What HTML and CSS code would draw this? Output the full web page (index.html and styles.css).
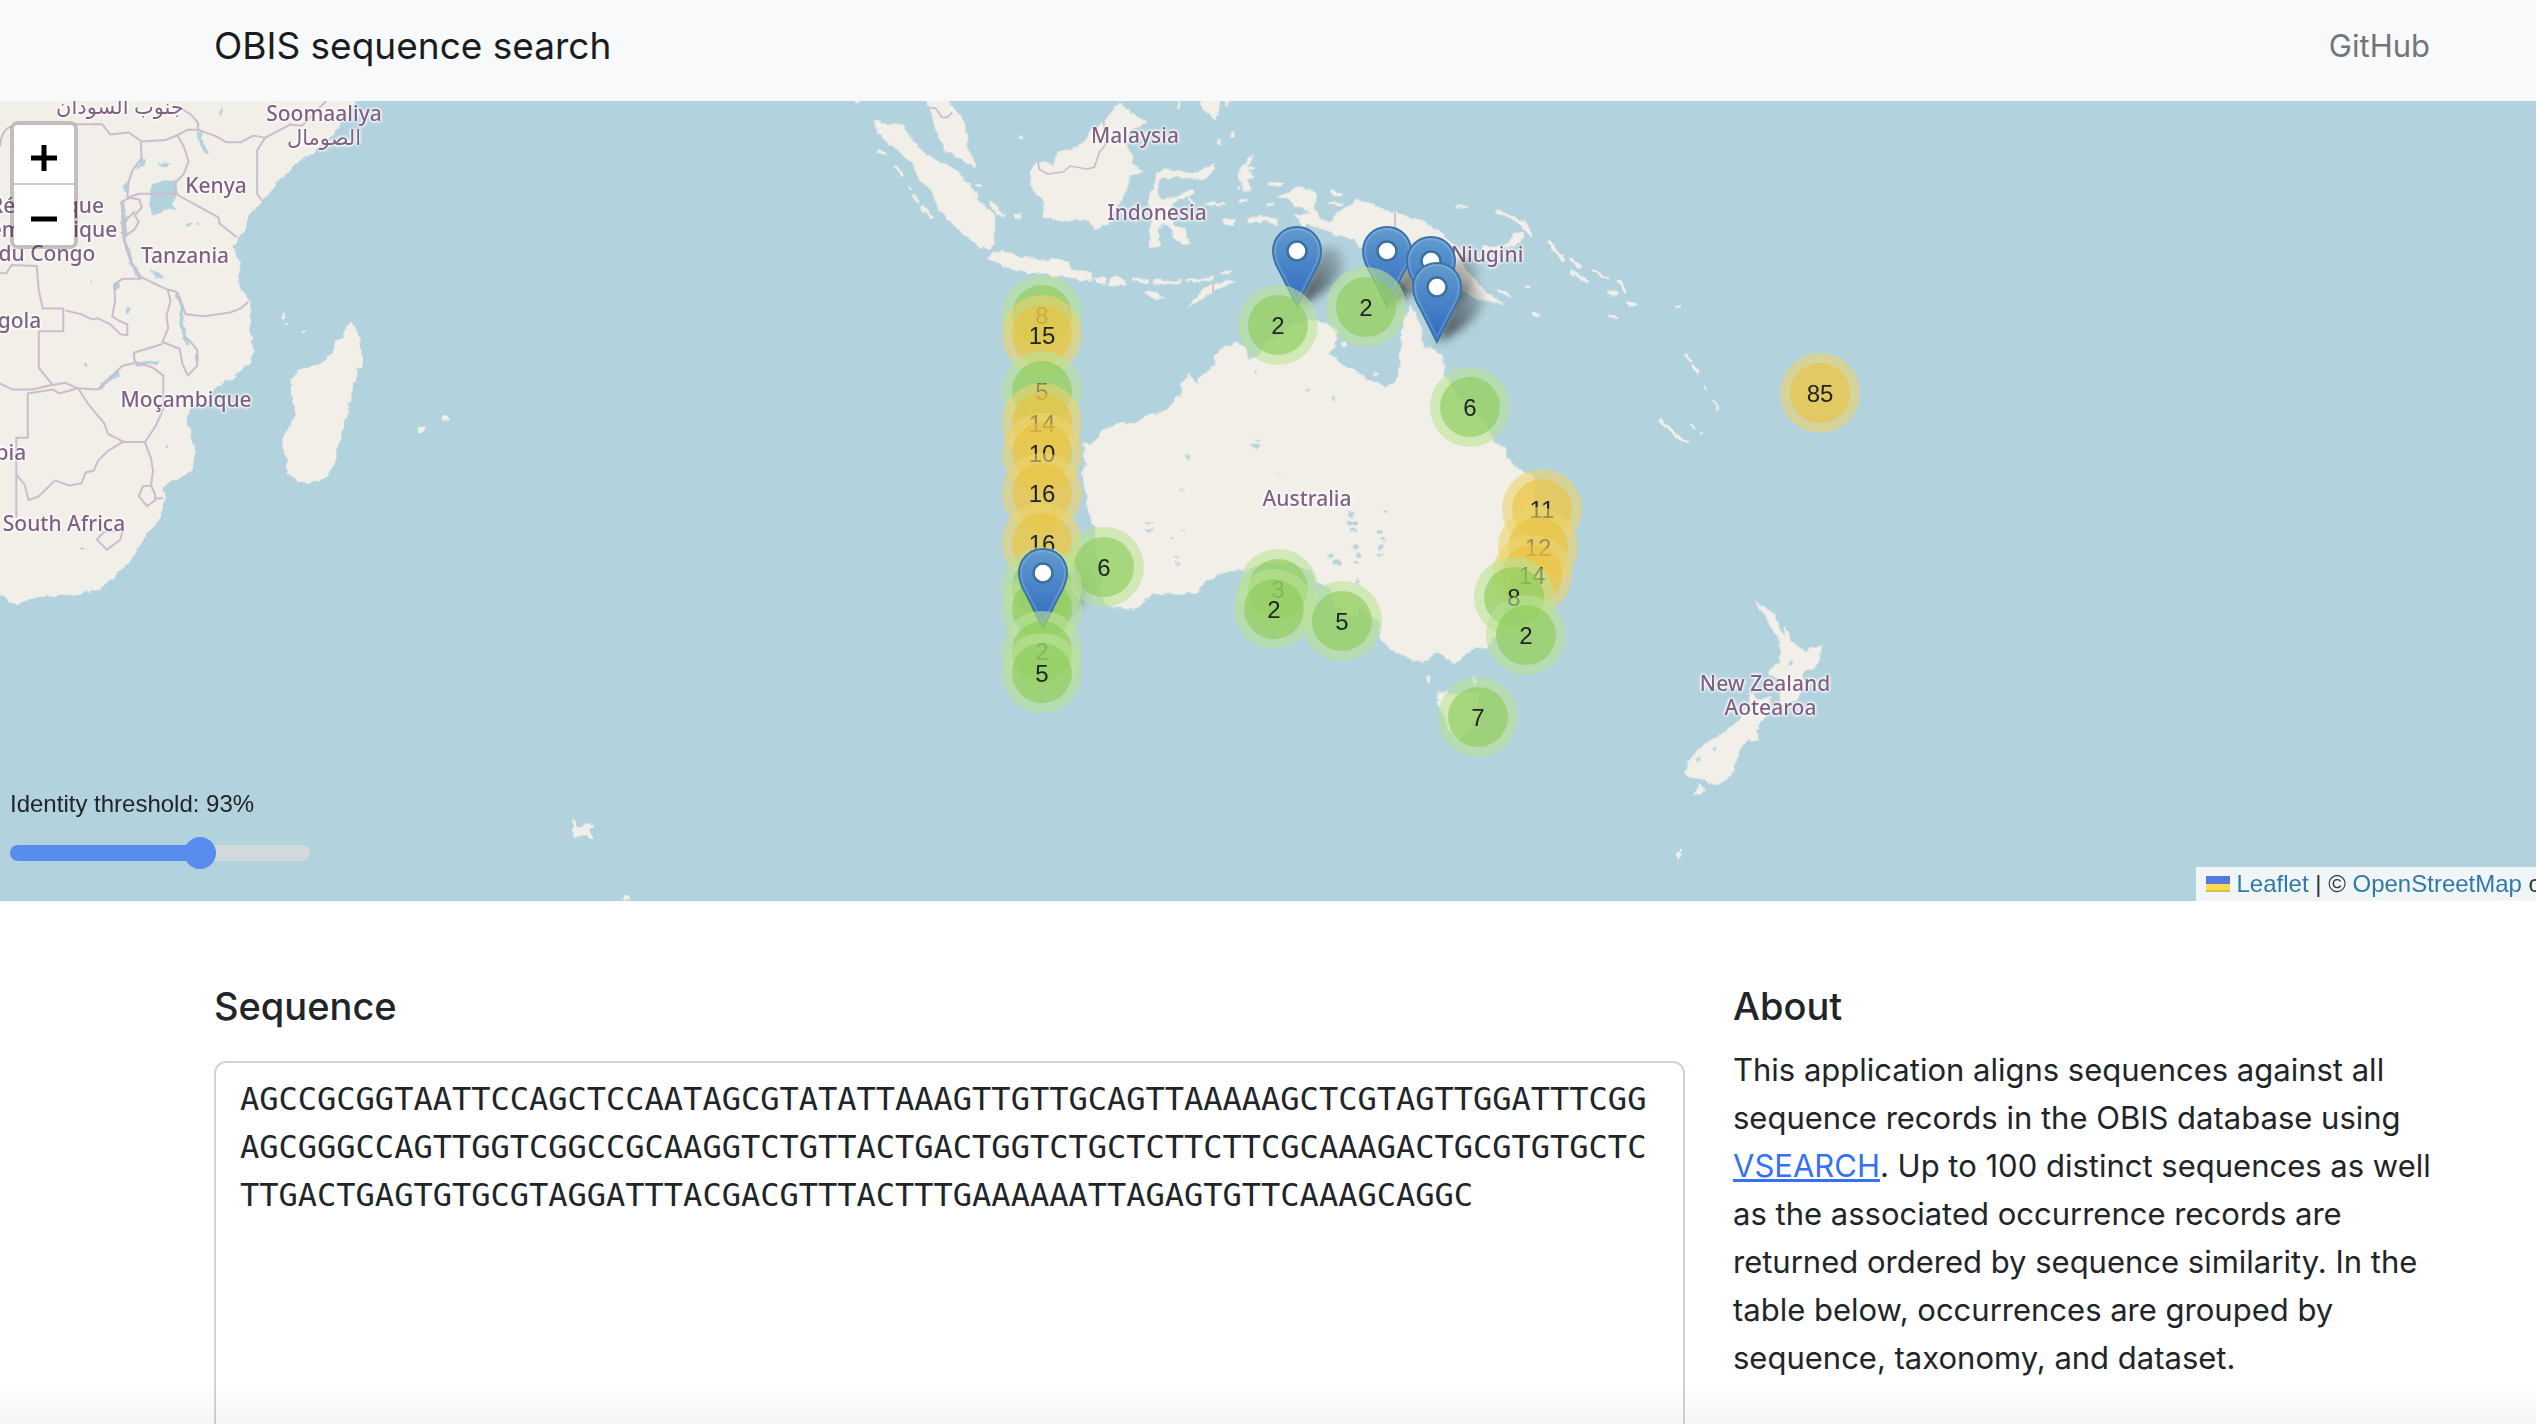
FILE: index.html
```html
<!DOCTYPE html>
<html lang="en">
<head>
<meta charset="utf-8">
<title>OBIS sequence search</title>
<link rel="stylesheet" href="styles.css">
</head>
<body>
<header class="navbar">
  <div class="container navbar-inner">
    <a class="brand" href="#">OBIS sequence search</a>
    <nav><a class="nav-link" href="#">GitHub</a></nav>
  </div>
</header>

<section class="map" aria-label="Occurrence map">
  <div class="map-pane">
    <svg class="tiles" viewBox="0 0 2536 800" width="2536" height="800" aria-hidden="true">
      <defs>
        <filter id="coast" x="0" y="0" width="2536" height="800" filterUnits="userSpaceOnUse">
          <feTurbulence type="fractalNoise" baseFrequency="0.12" numOctaves="3" seed="4" result="n"/>
          <feDisplacementMap in="SourceGraphic" in2="n" scale="6" xChannelSelector="R" yChannelSelector="G"/>
        </filter>
        <filter id="blur" x="-50%" y="-50%" width="200%" height="200%"><feGaussianBlur stdDeviation="5"/></filter>
        <linearGradient id="pinfill" x1="0" y1="0" x2="0" y2="1"><stop offset="0" stop-color="#619bce"/><stop offset="1" stop-color="#2f69c0"/></linearGradient>
        <linearGradient id="shade" x1="0" y1="1" x2="1" y2="0"><stop offset="0" stop-color="#000" stop-opacity=".7"/><stop offset="1" stop-color="#000" stop-opacity=".1"/></linearGradient>
        <symbol id="pin" viewBox="0 0 50 82">
          <path d="M25 1C11.500 1 1 11.500 1 25c0 9 4 16 8 23l16 32 16-32c4-7 8-14 8-23C49 11.500 38.500 1 25 1z" fill="url(#pinfill)" stroke="#3973a8" stroke-width="2"/>
          <path d="M25 3C12.600 3 3 12.600 3 25c0 8.500 4 15.500 8 22.500L25 75l14-27.500c4-7 8-14 8-22.500C47 12.600 37.400 3 25 3z" fill="none" stroke="#fff" stroke-opacity=".16" stroke-width="2"/>
          <circle cx="25" cy="25" r="9.500" fill="#fff" stroke="#3a709f" stroke-width="2.500"/>
        </symbol>
      </defs>
      <g class="land" filter="url(#coast)">
        <!-- Africa and Madagascar -->
        <g transform="matrix(.40816 0 0 .39541 0 -101)">
          <path d="M-20 240H880L862 270 835 312 820 340 785 365 770 385 725 415 690 450 660 485 640 515 610 540 605 565 590 595 572 625 580 650 588 665 583 700 592 730 612 765 614 800 613 850 622 885 615 915 590 940 565 960 525 980 510 1010 470 1030 455 1050 460 1075 472 1110 475 1140 472 1185 455 1200 415 1220 400 1235 403 1260 395 1290 388 1320 360 1345 335 1395 300 1440 260 1475 235 1493 205 1498 180 1508 145 1505 100 1508 65 1518 40 1530 20 1520 5 1505-20 1480Z"/>
          <path d="M858 812 868 825 880 855 883 895 892 915 885 928 873 930 875 950 865 970 860 1010 850 1050 838 1090 825 1140 815 1180 800 1207 775 1215 750 1225 730 1217 710 1200 703 1180 703 1155 692 1130 693 1105 710 1080 725 1050 720 1020 712 990 715 965 727 938 750 933 775 922 800 910 815 895 825 860 840 850 850 830Z"/>
          <circle cx="1034" cy="1085" r="8"/><circle cx="1091" cy="1058" r="8"/><ellipse cx="694" cy="800" rx="4" ry="8"/><circle cx="704" cy="816" r="3"/><circle cx="742" cy="836" r="4"/>
        </g>
        <!-- Indonesia and Malaysia -->
        <g transform="matrix(.35714 0 0 .33333 840 -11)">
          <path d="M95 88 120 100 175 103 190 130 215 165 240 190 290 220 320 235 345 260 365 285 385 320 400 345 437 380 433 420 430 475 395 475 360 440 330 420 305 390 275 350 255 300 220 270 208 225 185 205 150 170 120 145 100 115Z"/>
          <path d="M235 20H295L320 60 345 90 355 130 355 170 370 205 380 235 350 215 320 195 290 180 285 155 265 115 258 75Z"/>
          <path d="M430 485 480 487 500 498 545 507 580 510 610 505 640 520 650 540 705 548 705 575 670 570 640 562 600 558 560 550 520 545 470 535 450 520 415 510Z"/>
          <path d="M785 38 800 55 830 80 858 100 830 110 810 130 800 160 820 200 820 220 850 245 810 255 803 300 780 340 760 380 750 405 715 418 700 395 660 390 625 395 572 378 568 330 540 300 530 250 550 212 600 225 610 185 655 175 690 150 700 125 740 95 765 60Z"/>
          <path d="M885 255 910 235 940 242 1000 248 1025 235 1045 220 1050 235 1025 268 990 265 930 262 895 268 888 290 890 310 905 330 940 318 985 300 992 310 950 330 925 350 920 390 940 410 965 420 982 460 960 468 935 440 930 420 905 395 893 420 895 468 865 470 868 420 875 370 862 330 870 305 880 290Z"/>
          <path d="M710 560 745 565 740 585 715 575ZM752 570 772 558 800 568 800 586 755 585ZM818 565 865 570 860 580 820 575ZM880 568 925 574 962 570 950 582 880 582ZM970 570 1045 560 1045 568 972 578ZM1070 545 1098 541 1090 552 1070 552ZM850 602 885 605 908 625 895 630 855 612ZM1112 570 1060 578 1020 595 1000 620 975 652 1010 628 1040 605 1080 588Z"/>
          <path d="M1160 192 1138 212 1120 235 1120 260 1130 303 1150 303 1140 270 1162 262 1140 245 1162 230 1140 228ZM1010 20H1060L1062 60 1050 88 1020 65ZM1078 20 1090 33 1080 52ZM1140 385 1180 378 1220 385 1228 407 1190 395 1150 397ZM1075 388 1112 388 1102 408 1080 405ZM1118 328H1140V338H1118ZM1195 340H1215V348H1195ZM1200 278H1242L1235 292 1205 286ZM415 335 435 335 445 360 460 382 435 370ZM487 368 510 370 508 386 490 386ZM1020 338H1078V346H1020ZM498 138 510 138 512 150 502 152Z"/>
          <path d="M108 180 130 196M157 230 175 256M192 285 200 296M205 315 218 336M228 350 260 385M380 285 398 290M975 325 990 340M1372 305 1400 318M1365 340 1410 342M1100 125V145M1060 150V165M1120 295 1112 292M45 33 50 42M948 35 948 55" fill="none" stroke-width="8"/>
        </g>
        <!-- New Guinea and Melanesia -->
        <g transform="matrix(.33333 0 0 .33333 1200 -11)">
          <path d="M230 315 260 312 290 290 345 305 350 330 340 355 365 385 390 395 410 370 450 345 475 328 530 350 600 372 650 390 690 405 730 430 750 455 770 490 790 530 830 570 845 600 880 620 912 642 870 635 820 625 790 600 760 590 740 595 700 600 620 595 590 560 560 520 480 465 440 445 390 430 350 410 320 400 310 415 300 395 280 375 330 370 310 355 280 350 270 330Z"/>
          <path d="M942 430 970 422 972 445 945 465 905 478 850 486 845 470 890 468 925 458ZM1220 598 1255 605 1252 618 1225 612Z"/>
          <path d="M892 364 930 378 970 400 992 436M772 350H796M1048 455 1062 480 1090 508M1115 510 1140 528M1180 540 1220 565M1255 570 1275 605M1285 635 1305 648M1115 545 1160 575M1380 990 1415 1025 1462 1056M1460 795 1470 815M1482 830 1492 848M895 600 930 620M978 590H990M1000 670 1018 676M1232 676 1250 684M1430 648H1438M1475 1005 1482 1014M395 300 420 316" fill="none" stroke-width="10" stroke-linecap="round"/>
        </g>
        <!-- Australia -->
        <g transform="matrix(.35714 0 0 .33333 960 159)">
          <path d="M350 610 345 545 365 555 400 510 440 490 480 490 530 465 580 450 600 420 625 390 615 370 640 340 660 370 680 340 710 320 715 285 735 265 775 245 805 270 810 300 840 280 860 240 890 230 930 190 980 180 1030 190 1055 215 1050 250 1037 280 1080 320 1130 350 1190 383 1215 370 1230 330 1235 240 1240 190 1263 135 1285 185 1300 265 1325 265 1350 290 1358 345 1385 400 1430 440 1470 490 1495 548 1525 560 1530 590 1561 625 1606 650 1610 700 1612 760 1600 810 1590 880 1540 960 1520 1050 1500 1130 1476 1162 1441 1163 1421 1180 1386 1215 1351 1182 1331 1175 1296 1210 1240 1187 1200 1165 1178 1135 1175 1090 1140 1060 1115 1035 1110 1075 1085 1060 1050 1040 1035 980 1000 970 985 930 930 910 860 908 800 930 740 935 685 965 665 1000 545 1000 485 1047 440 1045 410 1035 390 1000 400 930 380 880 375 800 355 740 350 680 342 640Z"/>
          <circle cx="1077" cy="252" r="9"/><ellipse cx="1164" cy="343" rx="8" ry="5"/>
        </g>
        <!-- Tasmania and New Zealand -->
        <g transform="matrix(.35714 0 0 .33333 1380 279)">
          <path d="M158 935 190 940 275 935 272 1000 240 1060 220 1075 195 1050 170 990ZM130 885H142V905H132ZM258 890 270 896 272 915 262 912Z"/>
          <path d="M1050 662 1064 676 1087 687 1107 707 1114 742 1132 767 1135 737 1142 757 1155 792 1192 814 1217 799 1237 799 1232 832 1217 862 1192 872 1182 892 1187 922 1167 957 1142 972 1117 967 1127 932 1122 902 1087 882 1092 867 1117 847 1119 812 1120 787 1102 752 1082 712 1064 692Z"/>
          <path d="M1032 937 1052 947 1062 962 1097 952 1087 987 1072 1022 1052 1047 1064 1080 1032 1082 1005 1107 1000 1142 987 1177 962 1207 937 1217 902 1197 872 1192 854 1177 862 1152 882 1112 917 1087 952 1067 987 1037 1007 1017 1037 972Z"/>
          <path d="M893 1213 904 1228 898 1240 882 1245ZM908 15 916 28ZM872 132 882 150M933 58 945 92M896 158 904 164" stroke-width="5"/>
        </g>
        <path d="M573 718 578 726 593 724 589 730 592 737 581 733 574 737ZM624 795H629V799H624ZM1677 752 1681 748V757H1678Z"/>
      </g>
      <g class="water" filter="url(#coast)">
        <g transform="matrix(.40816 0 0 .39541 0 -101)">
          <path d="M372 468 400 455 430 455 436 490 422 515 430 530 400 530 372 545 368 500ZM335 425 345 405 360 400 352 420ZM388 412 418 414 410 424ZM278 718 292 708 292 728 278 738ZM368 680 385 688 402 705 385 702ZM335 918 390 914 385 922 335 924ZM312 780 322 780 318 793 310 793ZM455 568 470 563 465 572Z"/>
          <path d="M300 510 304 560 307 620 322 662 346 708M434 742 447 775 444 820 455 858 462 875M488 335 495 365 506 388M312 460 308 485M482 895V915M245 980 268 955 292 945" fill="none" stroke-width="9"/>
          <path d="M540 275 543 290M220 712 224 708M208 918V926M196 1388H208M404 1132H412M484 565H488" fill="none" stroke-width="6"/>
        </g>
        <g transform="matrix(.35714 0 0 .33333 960 159)">
          <path d="M812 555H840L832 566 818 562ZM830 538H842V544H830ZM628 590 648 586 640 598ZM880 635 902 643ZM968 388H982V394H968ZM1035 410 1052 416 1046 424ZM822 330 832 330 828 342ZM1085 756H1100V770H1085ZM1085 782H1112V795H1085ZM1092 810H1110V818H1092ZM1098 856 1115 858 1110 868 1098 866ZM1108 880H1124V892H1108ZM1045 902H1064V914H1045ZM1105 904H1118V912H1105ZM1028 882H1042V892H1028ZM1168 810H1180V820H1168ZM1182 832H1192V838H1182ZM1172 858H1186V866H1172ZM1170 880H1184V886H1170ZM518 806H542L530 818ZM520 788H536V792H520ZM616 688H628V692H616ZM600 886H610V890H600ZM604 906H614V914H604ZM1110 950 1118 968 1108 972ZM342 608H352V620H342ZM1186 752H1198V758H1186ZM620 810H630V814H620ZM590 832H600V836H590Z"/>
        </g>
        <g transform="matrix(.35714 0 0 .33333 1380 279)"><path d="M1146 843H1156V855H1146ZM932 1105 942 1100 936 1116ZM888 1135 896 1132 892 1148Z"/></g>
      </g>
      <g class="borders">
        <g transform="matrix(.40816 0 0 .39541 0 -101)">
          <path d="M185 314H250L270 340 315 335 348 358 405 354 435 342 460 328H485L530 345 555 360 590 360 620 343 650 348 675 335 710 315 740 318 770 285 800 255M445 275 468 290 485 310V328M435 342 450 370 462 408 450 440 430 462V490L535 550 538 565 580 600M650 348 630 380V490L645 512M345 358 347 400 325 430 315 460 312 500M312 500 340 490H430M300 545 298 510 320 500 342 505 347 525 330 545 340 560 330 580 310 595 305 560 330 535M300 545 302 600 320 660 345 700 380 718 410 732 432 738 445 770 455 795 500 800 565 790 590 780 608 763M345 705 300 705 280 720 282 760 275 800 290 810 312 820V848L295 845 270 820 240 805 225 808 200 795 160 785M0 690 15 692 28 670 90 673 95 735 105 780 155 780V838H95V930L130 975M410 732 418 760 408 800 412 830 398 865 440 882 447 920 460 950 483 925V885L465 862 450 850M398 870 328 892 330 915 375 930 400 950V1035L380 1080 355 1118H305L265 1098 255 1070 215 1020 190 980M330 918 300 925 265 960 240 985 190 982 160 968 120 975 80 985 30 985 0 970M190 982 145 995 130 985 68 995V1107H40V1310M305 1115 265 1140 240 1165 230 1190 210 1195 200 1222 170 1228 135 1215 95 1255 70 1265 60 1225 40 1200M355 1118 370 1160 375 1190 370 1228 350 1230 340 1255 360 1280 380 1265V1250L370 1228M380 1260H400M237 1365 255 1345 300 1342 295 1365 262 1390ZM0 370C2 345 10 325 28 320"/>
        </g>
        <g transform="matrix(.35714 0 0 .33333 840 -11)">
          <path d="M553 212 558 238 582 252 625 246 645 228 690 237 712 232 727 185 743 165 738 92M247 52 268 55 285 82 300 82 314 68M1045 583V605M1554 368V412"/>
        </g>
      </g>
    </svg>

    <span class="place arabic" style="left:120px;top:5px">جنوب السودان</span>
    <span class="place" style="left:324px;top:24px">Soomaaliya<br>الصومال</span>
    <span class="place" style="left:216px;top:84px">Kenya</span>
    <span class="place" style="left:47px;top:128px">République<br>démocratique<br>du Congo</span>
    <span class="place" style="left:185px;top:154px">Tanzania</span>
    <span class="place" style="left:6px;top:219px">Angola</span>
    <span class="place" style="left:186px;top:298px">Moçambique</span>
    <span class="place" style="left:-16px;top:351px">Namibia</span>
    <span class="place" style="left:64px;top:422px">South Africa</span>
    <span class="place" style="left:1135px;top:34px">Malaysia</span>
    <span class="place" style="left:1157px;top:111px">Indonesia</span>
    <span class="place" style="left:1487px;top:153px">Niugini</span>
    <span class="place" style="left:1307px;top:397px">Australia</span>
    <span class="place" style="left:1765px;top:594px">New Zealand<br>&nbsp;&nbsp;Aotearoa</span>

    <svg class="shadows" viewBox="0 0 2536 800" width="2536" height="800" aria-hidden="true">
      <g filter="url(#blur)" fill="url(#shade)">
        <path id="sh" d="M1297 205 1312 168 1322 148C1335 142 1346 152 1342 168 1336 184 1318 196 1297 205Z"/>
        <use href="#sh" x="90"/><use href="#sh" x="134" y="10"/><use href="#sh" x="140" y="36"/><use href="#sh" x="-254" y="322"/>
      </g>
    </svg>

    <svg class="pin" style="left:1272px;top:125px;z-index:206"><use href="#pin"/></svg>
    <svg class="pin" style="left:1362px;top:125px;z-index:205"><use href="#pin"/></svg>
    <svg class="pin" style="left:1406px;top:135px;z-index:216"><use href="#pin"/></svg>
    <svg class="pin" style="left:1412px;top:161px;z-index:242"><use href="#pin"/></svg>
    <svg class="pin" style="left:1018px;top:447px;z-index:528"><use href="#pin"/></svg>

    <div class="cluster small" style="left:1002px;top:174px;z-index:214"><span>8</span></div>
    <div class="cluster medium" style="left:1002px;top:194px;z-index:234"><span>15</span></div>
    <div class="cluster small" style="left:1002px;top:250px;z-index:290"><span>5</span></div>
    <div class="cluster medium" style="left:1002px;top:282px;z-index:322"><span>14</span></div>
    <div class="cluster medium" style="left:1002px;top:312px;z-index:352"><span>10</span></div>
    <div class="cluster medium" style="left:1002px;top:352px;z-index:392"><span>16</span></div>
    <div class="cluster medium" style="left:1002px;top:402px;z-index:442"><span>16</span></div>
    <div class="cluster small" style="left:1002px;top:446px;z-index:486"><span></span></div>
    <div class="cluster small" style="left:1002px;top:468px;z-index:508"><span></span></div>
    <div class="cluster small" style="left:1002px;top:510px;z-index:550"><span>2</span></div>
    <div class="cluster small" style="left:1002px;top:532px;z-index:572"><span>5</span></div>
    <div class="cluster small" style="left:1064px;top:426px;z-index:466"><span>6</span></div>
    <div class="cluster small" style="left:1238px;top:184px;z-index:224"><span>2</span></div>
    <div class="cluster small" style="left:1326px;top:166px;z-index:206"><span>2</span></div>
    <div class="cluster small" style="left:1430px;top:266px;z-index:306"><span>6</span></div>
    <div class="cluster small" style="left:1238px;top:448px;z-index:488"><span>3</span></div>
    <div class="cluster small" style="left:1234px;top:468px;z-index:508"><span>2</span></div>
    <div class="cluster small" style="left:1302px;top:480px;z-index:520"><span>5</span></div>
    <div class="cluster medium" style="left:1502px;top:368px;z-index:408"><span>11</span></div>
    <div class="cluster medium" style="left:1498px;top:406px;z-index:446"><span>12</span></div>
    <div class="cluster medium" style="left:1492px;top:434px;z-index:474"><span>14</span></div>
    <div class="cluster small" style="left:1474px;top:456px;z-index:496"><span>8</span></div>
    <div class="cluster small" style="left:1486px;top:494px;z-index:534"><span>2</span></div>
    <div class="cluster small" style="left:1438px;top:576px;z-index:616"><span>7</span></div>
    <div class="cluster medium" style="left:1780px;top:252px;z-index:292"><span>85</span></div>
  </div>

  <div class="zoom-control">
    <button type="button" aria-label="Zoom in"><svg viewBox="0 0 26 26"><path d="M13 0V26M0 13H26"/></svg></button>
    <button type="button" aria-label="Zoom out"><svg viewBox="0 0 26 26"><path d="M0 13H26"/></svg></button>
  </div>

  <div class="threshold">
    <label for="identity">Identity threshold: 93%</label>
    <input id="identity" type="range" min="80" max="100" value="93">
  </div>

  <div class="attribution">
    <svg width="24" height="16" viewBox="0 0 24 16" aria-hidden="true"><path fill="#5679db" d="M0 0H24V8H0z"/><path fill="#fbdb4e" d="M0 8H24V14H0z"/><path fill="#d9bf4a" d="M0 14H24V16H0z"/></svg>
    <a href="#">Leaflet</a> | © <a href="#">OpenStreetMap</a> contributors
  </div>
</section>

<main class="container columns">
  <section class="sequence">
    <h2><label for="sequence">Sequence</label></h2>
    <textarea id="sequence" rows="12" spellcheck="false">AGCCGCGGTAATTCCAGCTCCAATAGCGTATATTAAAGTTGTTGCAGTTAAAAAGCTCGTAGTTGGATTTCGGAGCGGGCCAGTTGGTCGGCCGCAAGGTCTGTTACTGACTGGTCTGCTCTTCTTCGCAAAGACTGCGTGTGCTCTTGACTGAGTGTGCGTAGGATTTACGACGTTTACTTTGAAAAAATTAGAGTGTTCAAAGCAGGC</textarea>
  </section>
  <section class="about">
    <h2>About</h2>
    <p>This application aligns sequences against all sequence records in the OBIS database using <a href="#">VSEARCH</a>. Up to 100 distinct sequences as well as the associated occurrence records are returned ordered by sequence similarity. In the table below, occurrences are grouped by sequence, taxonomy, and dataset.</p>
  </section>
</main>
<div class="page-fade"></div>
</body>
</html>
```
FILE: styles.css
```css
* { box-sizing: border-box; }

html { scrollbar-width: none; }

body {
  margin: 0;
  background: #fff;
  color: #212529;
  font: 31px/48px Inter, "Liberation Sans", sans-serif;
  overflow-x: hidden;
}

.container {
  max-width: 2280px;
  margin-left: 190px;
  padding: 0 24px;
}

.navbar { background: #f8f9fa; }
.navbar-inner {
  display: flex;
  align-items: center;
  justify-content: space-between;
  min-height: 101px;
  padding-bottom: 10px;
}
.brand { color: #1a1c1d; font-size: 37px; text-decoration: none; }
.nav-link { color: #737577; text-decoration: none; padding: 0 16px; }

/* Map */
.map {
  position: relative;
  height: 800px;
  overflow: hidden;
  background: #b2d2dd;
  font-family: "Liberation Sans", Arial, sans-serif;
  font-size: 24px;
  line-height: 34px;
}
.map-pane {
  position: absolute;
  inset: 0 auto 0 50%;
  width: 2536px;
  margin-left: -1268px;
  isolation: isolate;
}
.tiles, .shadows { position: absolute; left: 0; top: 0; }
.land { fill: #f2efe9; stroke: #f2efe9; stroke-width: 1; }
.water { fill: #b2d2dd; stroke: #b2d2dd; stroke-width: 1; }
.borders { fill: none; stroke: #cdbccd; stroke-width: 5; stroke-linejoin: round; }

.place {
  position: absolute;
  transform: translate(-50%, -50%);
  font: 500 21px/24px "Noto Sans", "DejaVu Sans", sans-serif;
  color: #806083;
  text-align: center;
  white-space: nowrap;
  text-shadow: 0 0 2px #fff, 0 0 3px #fff, 0 0 3px #fff, 0 0 4px #fff;
}

.pin { position: absolute; width: 50px; height: 82px; }

.cluster {
  position: absolute;
  width: 80px;
  height: 80px;
  padding: 10px;
  border-radius: 50%;
}
.cluster span {
  display: block;
  height: 60px;
  border-radius: 50%;
  line-height: 62px;
  text-align: center;
}
.small { background: rgba(186, 226, 150, .6); }
.small span { background: rgba(138, 204, 84, .6); }
.medium { background: rgba(237, 211, 108, .6); }
.medium span { background: rgba(234, 194, 62, .6); }

.zoom-control {
  position: absolute;
  left: 10px;
  top: 20px;
  display: flex;
  flex-direction: column;
  border: 4px solid rgba(0, 0, 0, .2);
  border-radius: 8px;
  background-clip: padding-box;
}
.zoom-control button {
  display: grid;
  place-items: center;
  width: 60px;
  height: 60px;
  padding: 8px 0 0;
  border: 0;
  background: #fff;
}
.zoom-control button:first-child { border-bottom: 2px solid #ccc; border-radius: 4px 4px 0 0; }
.zoom-control button:last-child { border-radius: 0 0 4px 4px; }
.zoom-control svg { width: 26px; height: 26px; fill: none; stroke: #000; stroke-width: 5; }

.threshold {
  position: absolute;
  left: 10px;
  bottom: 32px;
  display: flex;
  flex-direction: column;
  gap: 16px;
}
.threshold input {
  -webkit-appearance: none;
  appearance: none;
  width: 300px;
  height: 32px;
  margin: 0;
  background: transparent;
}
.threshold input::-webkit-slider-runnable-track {
  height: 16px;
  border-radius: 8px;
  background: linear-gradient(90deg, #588cee 190px, #d1d9dc 190px);
}
.threshold input::-webkit-slider-thumb {
  -webkit-appearance: none;
  width: 32px;
  height: 32px;
  margin-top: -8px;
  border-radius: 50%;
  background: #588cee;
}

.attribution {
  position: absolute;
  right: -128px;
  bottom: 0;
  padding: 0 10px;
  white-space: nowrap;
  background: rgba(255, 255, 255, .8);
  color: #333;
}
.attribution a { color: #3079a8; text-decoration: none; }

/* Content */
.columns {
  display: grid;
  grid-template-columns: 1471fr 713fr;
  gap: 48px;
  padding-top: 80px;
}
h2 { margin: 0; font-size: 38px; line-height: 50px; font-weight: 500; }
.sequence { display: flex; flex-direction: column; gap: 30px; }
.about { display: flex; flex-direction: column; gap: 15px; }
textarea {
  display: block;
  width: 100%;
  padding: 12px 24px;
  border: 2px solid #ced4da;
  border-radius: 12px;
  background: transparent;
  color: #212529;
  font: 32px/48px "DejaVu Sans Mono", monospace;
  resize: none;
  overflow: hidden;
}
p { margin: 0; }
p a { color: #3670f5; }

.page-fade {
  position: fixed;
  inset: auto 0 0;
  height: 40px;
  pointer-events: none;
  background: linear-gradient(transparent, rgba(0, 0, 0, .04));
}
```
